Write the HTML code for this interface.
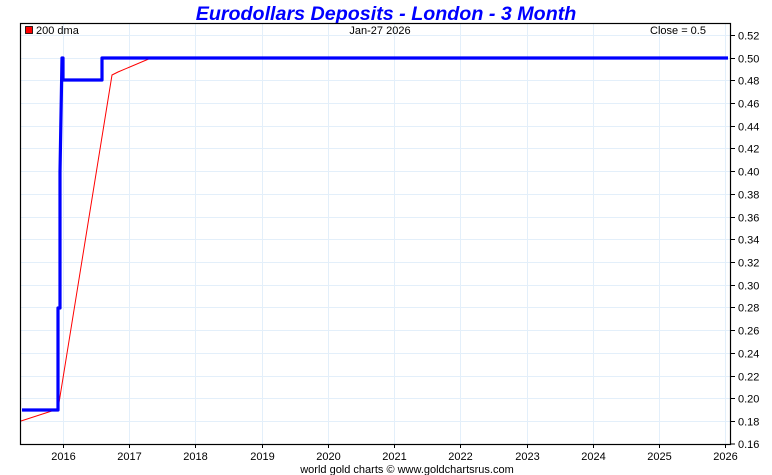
<!DOCTYPE html>
<html><head><meta charset="utf-8"><style>
html,body{margin:0;padding:0;background:#fff;}
svg{display:block;font-family:"Liberation Sans",Arial,sans-serif;}
</style></head><body>
<svg width="772" height="475" viewBox="0 0 772 475" xmlns="http://www.w3.org/2000/svg">
<rect width="772" height="475" fill="#fff"/>
<text x="386" y="20" text-anchor="middle" font-size="19.7" font-weight="bold" font-style="italic" fill="#0000ff">Eurodollars Deposits - London - 3 Month</text>
<g stroke="#e3effa" stroke-width="1">
<line x1="20" x2="730" y1="35.5" y2="35.5"/><line x1="20" x2="730" y1="58.5" y2="58.5"/><line x1="20" x2="730" y1="80.5" y2="80.5"/><line x1="20" x2="730" y1="103.5" y2="103.5"/><line x1="20" x2="730" y1="126.5" y2="126.5"/><line x1="20" x2="730" y1="148.5" y2="148.5"/><line x1="20" x2="730" y1="171.5" y2="171.5"/><line x1="20" x2="730" y1="194.5" y2="194.5"/><line x1="20" x2="730" y1="217.5" y2="217.5"/><line x1="20" x2="730" y1="239.5" y2="239.5"/><line x1="20" x2="730" y1="262.5" y2="262.5"/><line x1="20" x2="730" y1="285.5" y2="285.5"/><line x1="20" x2="730" y1="307.5" y2="307.5"/><line x1="20" x2="730" y1="330.5" y2="330.5"/><line x1="20" x2="730" y1="353.5" y2="353.5"/><line x1="20" x2="730" y1="376.5" y2="376.5"/><line x1="20" x2="730" y1="398.5" y2="398.5"/><line x1="20" x2="730" y1="421.5" y2="421.5"/>
<line y1="23" y2="444" x1="63.5" x2="63.5"/><line y1="23" y2="444" x1="129.5" x2="129.5"/><line y1="23" y2="444" x1="195.5" x2="195.5"/><line y1="23" y2="444" x1="262.5" x2="262.5"/><line y1="23" y2="444" x1="328.5" x2="328.5"/><line y1="23" y2="444" x1="394.5" x2="394.5"/><line y1="23" y2="444" x1="460.5" x2="460.5"/><line y1="23" y2="444" x1="527.5" x2="527.5"/><line y1="23" y2="444" x1="593.5" x2="593.5"/><line y1="23" y2="444" x1="659.5" x2="659.5"/><line y1="23" y2="444" x1="725.5" x2="725.5"/>
</g>
<polyline fill="none" stroke="#ff0000" stroke-width="1" points="21,421 58,409 112,75 118,72 151,58 728,58"/>
<polyline fill="none" stroke="#0000ff" stroke-width="3.2" stroke-linejoin="round" points="22,410 58,410 58,308 60,308 60,172 61,115 62,58 63,58 63,80 102,80 102,58 728,58"/>
<rect x="20.5" y="23.5" width="710" height="421" fill="none" stroke="#000" stroke-width="1.2"/>
<rect x="25.5" y="26.5" width="7" height="7" fill="#ff0000" stroke="#000" stroke-width="0.8"/>
<g font-size="11" fill="#000">
<text x="36" y="34">200 dma</text>
<text x="380" y="34" text-anchor="middle">Jan-27  2026</text>
<text x="678" y="34" text-anchor="middle">Close = 0.5</text>
</g>
<g stroke="#000" stroke-width="1">
<line x1="730" x2="735" y1="35.5" y2="35.5"/><line x1="730" x2="735" y1="58.5" y2="58.5"/><line x1="730" x2="735" y1="80.5" y2="80.5"/><line x1="730" x2="735" y1="103.5" y2="103.5"/><line x1="730" x2="735" y1="126.5" y2="126.5"/><line x1="730" x2="735" y1="148.5" y2="148.5"/><line x1="730" x2="735" y1="171.5" y2="171.5"/><line x1="730" x2="735" y1="194.5" y2="194.5"/><line x1="730" x2="735" y1="217.5" y2="217.5"/><line x1="730" x2="735" y1="239.5" y2="239.5"/><line x1="730" x2="735" y1="262.5" y2="262.5"/><line x1="730" x2="735" y1="285.5" y2="285.5"/><line x1="730" x2="735" y1="307.5" y2="307.5"/><line x1="730" x2="735" y1="330.5" y2="330.5"/><line x1="730" x2="735" y1="353.5" y2="353.5"/><line x1="730" x2="735" y1="376.5" y2="376.5"/><line x1="730" x2="735" y1="398.5" y2="398.5"/><line x1="730" x2="735" y1="421.5" y2="421.5"/><line x1="730" x2="735" y1="444" y2="444"/>
<line y1="444" y2="448" x1="63.5" x2="63.5"/><line y1="444" y2="448" x1="129.5" x2="129.5"/><line y1="444" y2="448" x1="195.5" x2="195.5"/><line y1="444" y2="448" x1="262.5" x2="262.5"/><line y1="444" y2="448" x1="328.5" x2="328.5"/><line y1="444" y2="448" x1="394.5" x2="394.5"/><line y1="444" y2="448" x1="460.5" x2="460.5"/><line y1="444" y2="448" x1="527.5" x2="527.5"/><line y1="444" y2="448" x1="593.5" x2="593.5"/><line y1="444" y2="448" x1="659.5" x2="659.5"/><line y1="444" y2="448" x1="725.5" x2="725.5"/>
</g>
<g font-size="11" fill="#000">
<text x="738" y="39.5">0.52</text><text x="738" y="62.5">0.50</text><text x="738" y="84.5">0.48</text><text x="738" y="107.5">0.46</text><text x="738" y="130.5">0.44</text><text x="738" y="152.5">0.42</text><text x="738" y="175.5">0.40</text><text x="738" y="198.5">0.38</text><text x="738" y="221.5">0.36</text><text x="738" y="243.5">0.34</text><text x="738" y="266.5">0.32</text><text x="738" y="289.5">0.30</text><text x="738" y="311.5">0.28</text><text x="738" y="334.5">0.26</text><text x="738" y="357.5">0.24</text><text x="738" y="380.5">0.22</text><text x="738" y="402.5">0.20</text><text x="738" y="425.5">0.18</text><text x="738" y="448">0.16</text>
</g>
<g font-size="11" fill="#000" text-anchor="middle">
<text x="63.5" y="460">2016</text><text x="129.5" y="460">2017</text><text x="195.5" y="460">2018</text><text x="262.5" y="460">2019</text><text x="328.5" y="460">2020</text><text x="394.5" y="460">2021</text><text x="460.5" y="460">2022</text><text x="527.5" y="460">2023</text><text x="593.5" y="460">2024</text><text x="659.5" y="460">2025</text><text x="725.5" y="460">2026</text>
<text x="407" y="473">world gold charts © www.goldchartsrus.com</text>
</g>
</svg>
</body></html>
